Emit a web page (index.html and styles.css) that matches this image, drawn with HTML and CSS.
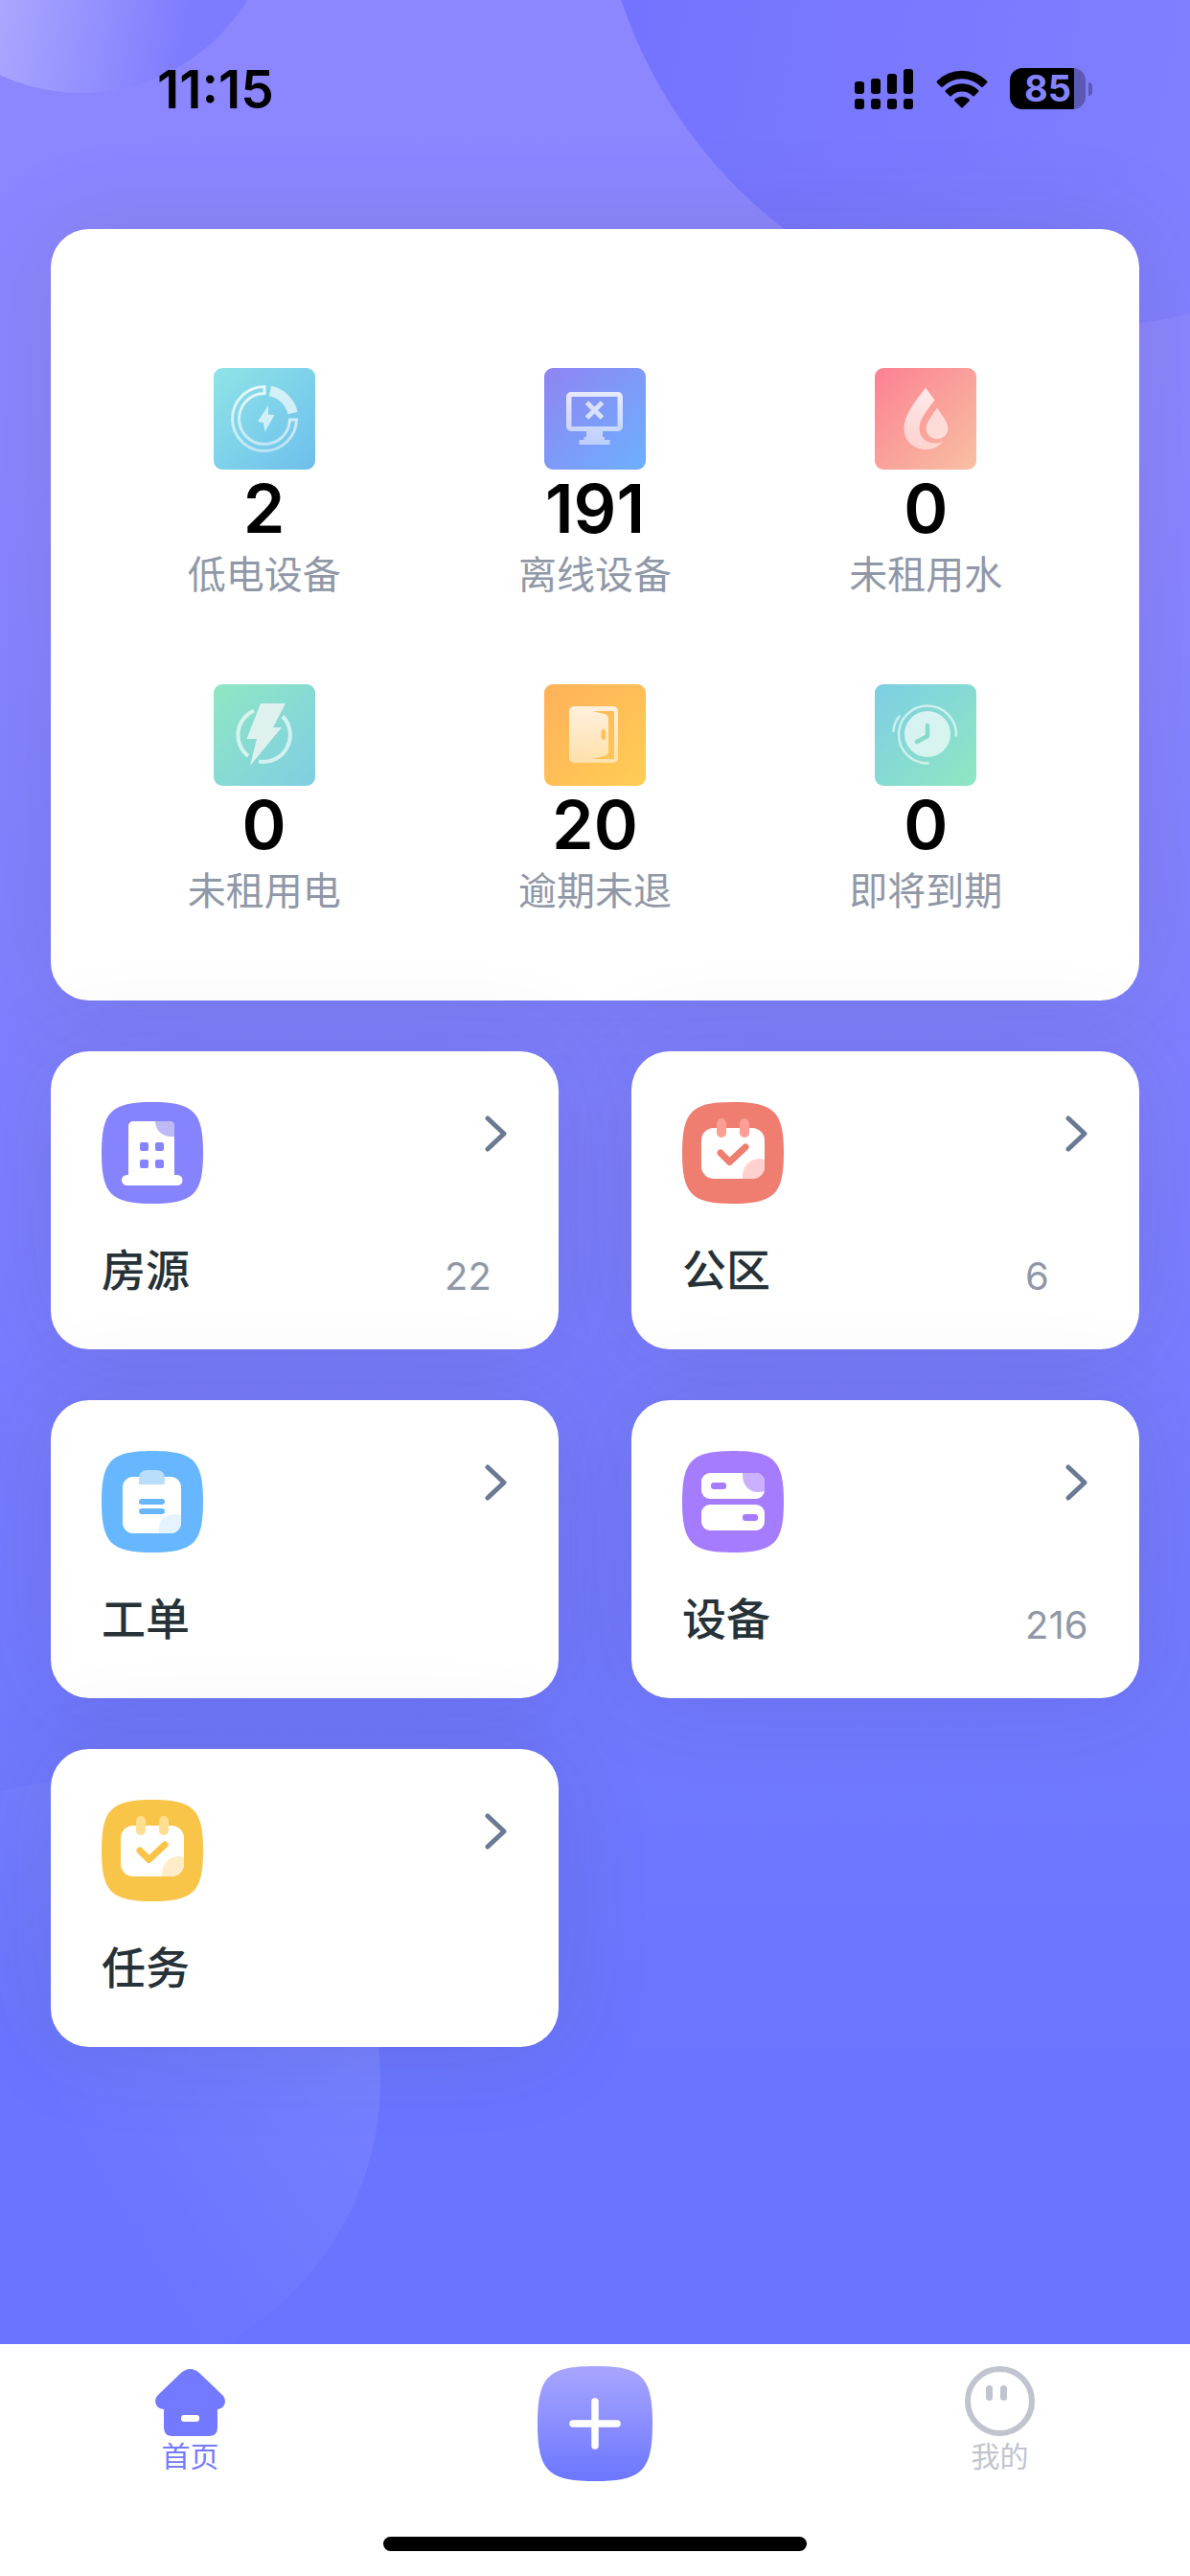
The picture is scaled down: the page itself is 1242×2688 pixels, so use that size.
FILE: index.html
```html
<!DOCTYPE html>
<html lang="zh-CN">
<head>
    <meta charset="UTF-8">
    <meta name="viewport" content="width=device-width, initial-scale=1.0">
    <title>首页</title>
    <link rel="stylesheet" href="styles.css">
</head>
<body>
<div class="page">
    <div class="decor">
        <span class="circle circle-left"></span>
        <span class="circle circle-right"></span>
        <span class="circle circle-bottom"></span>
    </div>

    <header class="status-bar">
        <span class="time">11:15</span>
        <div class="status-icons">
            <svg width="62" height="42" viewBox="0 0 62 42">
                <rect x="0" y="13" width="10" height="13" rx="3"/>
                <rect x="17" y="10" width="10" height="16" rx="3"/>
                <rect x="34" y="5" width="10" height="21" rx="3"/>
                <rect x="51" y="0" width="10" height="26" rx="3"/>
                <rect x="0" y="31" width="10" height="11" rx="3"/>
                <rect x="17" y="31" width="10" height="11" rx="3"/>
                <rect x="34" y="31" width="10" height="11" rx="3"/>
                <rect x="51" y="31" width="10" height="11" rx="3"/>
            </svg>
            <svg width="54" height="40" viewBox="0 0 54 40">
                <path d="M1 11.500A37 37 0 0 1 53 11.500Q54 12.500 53 13.500L49 17.500Q48 18.500 47 17.500A28.500 28.500 0 0 0 7 17.500Q6 18.500 5 17.500L1 13.500Q0 12.500 1 11.500Z"/>
                <path d="M10 21A24.500 24.500 0 0 1 44 21Q45 22 44 23L40 27Q39 28 38 27A16 16 0 0 0 16 27Q15 28 14 27L10 23Q9 22 10 21Z"/>
                <path d="M19.500 30.500A11.500 11.500 0 0 1 34.500 30.500Q35.500 31.500 34.500 32.500L28 39Q27 40 26 39L19.500 32.500Q18.500 31.500 19.500 30.500Z"/>
            </svg>
            <div class="battery"><span class="battery-level">85</span></div>
        </div>
    </header>

    <main class="content">
        <section class="stats">
            <a class="stat" href="#">
                <span class="stat-icon cyan">
                    <svg viewBox="0 0 106 106">
                        <defs>
                            <linearGradient id="fade" x1="0" y1="0" x2="0" y2="1">
                                <stop offset="0" stop-color="#fff" stop-opacity=".8"/>
                                <stop offset="1" stop-color="#fff" stop-opacity=".5"/>
                            </linearGradient>
                        </defs>
                        <path d="M53 19.500A33.500 33.500 0 1 0 86.500 54H79.500A26.500 26.500 0 1 1 53 26.500Z" fill="none" stroke="url(#fade)" stroke-width="3"/>
                        <path d="M59 24A30 30 0 0 1 82.500 47" fill="none" stroke="#fff" stroke-opacity=".66" stroke-width="10.500"/>
                        <path d="M57 39L46 56L52 57L53.500 66.500L63.500 49L57 48.500Z" fill="#fff" fill-opacity=".65"/>
                    </svg>
                </span>
                <strong>2</strong>
                <span class="stat-label">低电设备</span>
            </a>
            <a class="stat" href="#">
                <span class="stat-icon indigo">
                    <svg viewBox="0 0 106 106">
                        <path d="M28 25H77A5 5 0 0 1 82 30V61A5 5 0 0 1 77 66H61V72H63V75H68.500V80H36.500V75H41.500V72H44V66H28A5 5 0 0 1 23 61V30A5 5 0 0 1 28 25ZM28.500 30V61H76.500V30Z" fill="url(#fade)" fill-rule="evenodd"/>
                        <path d="M44.500 36L60.500 52M60.500 36L44.500 52" stroke="#fff" stroke-opacity=".7" stroke-width="5"/>
                    </svg>
                </span>
                <strong>191</strong>
                <span class="stat-label">离线设备</span>
            </a>
            <a class="stat" href="#">
                <span class="stat-icon pink">
                    <svg viewBox="0 0 106 106">
                        <path d="M53 20.500L62.500 33.500C54 45 46.500 54 46.500 63C46.500 74 57 82 71 77C66 82.500 60 85 53 85C40 85 30.500 75 30.500 63C30.500 49 43 34 53 20.500Z" fill="url(#fade)"/>
                        <path d="M65 41.500C70 49 76.500 57 76.500 63C76.500 69.500 71 74 65 74C59 74 53.500 69.500 53.500 63C53.500 57 60 49 65 41.500Z" fill="#fff" fill-opacity=".6"/>
                    </svg>
                </span>
                <strong>0</strong>
                <span class="stat-label">未租用水</span>
            </a>
            <a class="stat" href="#">
                <span class="stat-icon green">
                    <svg viewBox="0 0 106 106">
                        <path d="M42 27.500A28 28 0 0 0 36 75M72 33.500A28 28 0 0 1 47 80.500" fill="none" stroke="#fff" stroke-opacity=".65" stroke-width="4"/>
                        <path d="M49 20H75L62 45H71L38 85L45 57H34.500Z" fill="#eef4f3" fill-opacity=".85"/>
                    </svg>
                </span>
                <strong>0</strong>
                <span class="stat-label">未租用电</span>
            </a>
            <a class="stat" href="#">
                <span class="stat-icon orange">
                    <svg viewBox="0 0 106 106">
                        <path d="M31 23H72A5 5 0 0 1 77 28V77A5 5 0 0 1 72 82H31A5 5 0 0 1 26 77V28A5 5 0 0 1 31 23ZM50 28L63 31Q67 32 67 36V70Q67 74 63 75L50 78H73V28ZM62 47Q59.500 47 59.500 50V55Q59.500 58 62 58Q64 58 64 55V50Q64 47 62 47Z" fill="url(#fade)" fill-rule="evenodd"/>
                    </svg>
                </span>
                <strong>20</strong>
                <span class="stat-label">逾期未退</span>
            </a>
            <a class="stat" href="#">
                <span class="stat-icon teal">
                    <svg viewBox="0 0 106 106" fill="none" stroke-linecap="round" stroke-linejoin="round">
                        <circle cx="55" cy="52" r="24" fill="#fff" fill-opacity=".67"/>
                        <path d="M85 53.500A30 30 0 1 0 55.500 82.500M25.500 33.500Q20 40 19.500 49" stroke="#fff" stroke-opacity=".6" stroke-width="2.500"/>
                        <path d="M55 43V54L44 60" stroke="#86dbcb" stroke-width="4.500"/>
                    </svg>
                </span>
                <strong>0</strong>
                <span class="stat-label">即将到期</span>
            </a>
        </section>

        <nav class="menu">
            <a class="menu-card" href="#">
                <div class="menu-main">
                    <svg class="menu-icon" viewBox="0 0 106 106">
                        <path d="M53 0C96 0 106 10 106 53S96 106 53 106 0 96 0 53 10 0 53 0Z" fill="#8683ff"/>
                        <path d="M33 20H71A5 5 0 0 1 76 25V76H79A5.500 5.500 0 0 1 79 87H26.500A5.500 5.500 0 0 1 26.500 76H28V25A5 5 0 0 1 33 20Z" fill="#fff"/>
                        <path d="M56 20H71A5 5 0 0 1 76 25V36H72A16 16 0 0 1 56 20Z" fill="#bebaf5"/>
                        <g fill="#8683ff">
                            <rect x="40" y="42" width="9" height="9" rx="2"/>
                            <rect x="56" y="42" width="9" height="9" rx="2"/>
                            <rect x="40" y="60" width="9" height="9" rx="2"/>
                            <rect x="56" y="60" width="9" height="9" rx="2"/>
                        </g>
                    </svg>
                    <span class="menu-title">房源</span>
                </div>
                <div class="menu-side">
                    <svg class="arrow" viewBox="0 0 24 38"><path d="M3 3L20 19L3 35"/></svg>
                    <span class="count">22</span>
                </div>
            </a>
            <a class="menu-card" href="#">
                <div class="menu-main">
                    <svg class="menu-icon" viewBox="0 0 106 106">
                        <path d="M53 0C96 0 106 10 106 53S96 106 53 106 0 96 0 53 10 0 53 0Z" fill="#ef7d70"/>
                        <rect x="20" y="27" width="66" height="53" rx="13" fill="#fff"/>
                        <path d="M63 80C62 68 70 59 81 59L86 60V67A13 13 0 0 1 73 80Z" fill="#ffd1ce"/>
                        <rect x="36" y="17" width="10" height="20" rx="5" fill="#fb9f95"/>
                        <rect x="60" y="17" width="10" height="20" rx="5" fill="#fb9f95"/>
                        <path d="M40 53L49.500 62.500L66 47" fill="none" stroke="#ef7d70" stroke-width="7" stroke-linecap="round" stroke-linejoin="round"/>
                    </svg>
                    <span class="menu-title">公区</span>
                </div>
                <div class="menu-side">
                    <svg class="arrow" viewBox="0 0 24 38"><path d="M3 3L20 19L3 35"/></svg>
                    <span class="count">6</span>
                </div>
            </a>
            <a class="menu-card" href="#">
                <div class="menu-main">
                    <svg class="menu-icon" viewBox="0 0 106 106">
                        <path d="M53 0C96 0 106 10 106 53S96 106 53 106 0 96 0 53 10 0 53 0Z" fill="#66b7ff"/>
                        <rect x="22" y="27" width="61" height="59" rx="11" fill="#fff"/>
                        <path d="M60 86C58 75 65 66 76 66L83 67V75A11 11 0 0 1 72 86Z" fill="#e4f3fe"/>
                        <path d="M39 35V29Q39 20 48 20H57Q66 20 66 29V33Q66 35 64 35Z" fill="#b8defb"/>
                        <rect x="39" y="50" width="27" height="6" rx="3" fill="#66b7ff"/>
                        <rect x="39" y="60" width="27" height="6" rx="3" fill="#66b7ff"/>
                    </svg>
                    <span class="menu-title">工单</span>
                </div>
                <div class="menu-side">
                    <svg class="arrow" viewBox="0 0 24 38"><path d="M3 3L20 19L3 35"/></svg>
                </div>
            </a>
            <a class="menu-card" href="#">
                <div class="menu-main">
                    <svg class="menu-icon" viewBox="0 0 106 106">
                        <path d="M53 0C96 0 106 10 106 53S96 106 53 106 0 96 0 53 10 0 53 0Z" fill="#a67cff"/>
                        <rect x="20" y="23" width="66" height="27" rx="9" fill="#fff"/>
                        <rect x="20" y="56" width="66" height="27" rx="9" fill="#fff"/>
                        <path d="M63 23H77A9 9 0 0 1 86 32V42C73 46 62 38 63 23Z" fill="#cbb0ff"/>
                        <rect x="30" y="33" width="16" height="7" rx="3" fill="#a67cff"/>
                        <rect x="63" y="66" width="16" height="7" rx="3" fill="#a67cff"/>
                    </svg>
                    <span class="menu-title">设备</span>
                </div>
                <div class="menu-side">
                    <svg class="arrow" viewBox="0 0 24 38"><path d="M3 3L20 19L3 35"/></svg>
                    <span class="count">216</span>
                </div>
            </a>
            <a class="menu-card" href="#">
                <div class="menu-main">
                    <svg class="menu-icon" viewBox="0 0 106 106">
                        <path d="M53 0C96 0 106 10 106 53S96 106 53 106 0 96 0 53 10 0 53 0Z" fill="#f9c549"/>
                        <rect x="20" y="27" width="66" height="53" rx="13" fill="#fff"/>
                        <path d="M63 80C62 68 70 59 81 59L86 60V67A13 13 0 0 1 73 80Z" fill="#ffecc8"/>
                        <rect x="36" y="17" width="10" height="20" rx="5" fill="#ffdf91"/>
                        <rect x="60" y="17" width="10" height="20" rx="5" fill="#ffdf91"/>
                        <path d="M40 53L49.500 62.500L66 47" fill="none" stroke="#f9c549" stroke-width="7" stroke-linecap="round" stroke-linejoin="round"/>
                    </svg>
                    <span class="menu-title">任务</span>
                </div>
                <div class="menu-side">
                    <svg class="arrow" viewBox="0 0 24 38"><path d="M3 3L20 19L3 35"/></svg>
                </div>
            </a>
        </nav>
    </main>

    <footer class="tab-bar">
        <div class="tabs">
            <a class="tab active" href="#">
                <svg viewBox="0 0 73 73">
                    <path d="M27 7Q36.500 -1 46 7L70 30C76 36 72 45 65 45V64Q65 73 56 73H18Q9 73 9 64V45C1 45 -3 36 3 30Z" fill="#747aff"/>
                    <rect x="27" y="51" width="19" height="7" rx="3" fill="#fff"/>
                </svg>
                <span>首页</span>
            </a>
            <button class="add" type="button" aria-label="添加">
                <svg viewBox="0 0 120 120">
                    <defs>
                        <linearGradient id="addFill" x1="0" y1="0" x2="0" y2="1">
                            <stop offset="0" stop-color="#a9a6ff"/>
                            <stop offset="1" stop-color="#6b76ff"/>
                        </linearGradient>
                    </defs>
                    <path d="M60 0C109 0 120 11 120 60S109 120 60 120 0 109 0 60 11 0 60 0Z" fill="url(#addFill)"/>
                    <path d="M60 37V83M37 60H83" stroke="#fff" stroke-width="7.500" stroke-linecap="round"/>
                </svg>
            </button>
            <a class="tab" href="#">
                <svg viewBox="0 0 73 73">
                    <circle cx="36.500" cy="36.500" r="33.500" fill="none" stroke="#c0c4ce" stroke-width="6"/>
                    <rect x="22" y="20" width="7" height="16" rx="3.500" fill="#c0c4ce"/>
                    <rect x="37" y="20" width="7" height="16" rx="3.500" fill="#c0c4ce"/>
                </svg>
                <span>我的</span>
            </a>
        </div>
        <div class="home-indicator"></div>
    </footer>
</div>
</body>
</html>
```

FILE: styles.css
```css
* {
    box-sizing: border-box;
}
body {
    margin: 0;
    font-family: Inter, "Noto Sans CJK SC", sans-serif;
    color: #263238;
}
a {
    color: inherit;
    text-decoration: none;
}
svg {
    display: block;
}
.page {
    position: relative;
    z-index: 0;
    display: flex;
    flex-direction: column;
    min-height: 100vh;
    background: linear-gradient(#8c87ff 0%, #8b85ff 18%, #6975ff 80%, #6774ff 100%);
}

/* фоновые круги */
.decor {
    position: absolute;
    inset: 0;
    z-index: -1;
    overflow: hidden;
}
.circle {
    position: absolute;
    border-radius: 50%;
}
.circle-left {
    left: -118px;
    top: -309px;
    width: 406px;
    height: 406px;
    background: linear-gradient(100deg, #b0aeff 30%, #7f7bff 78%);
}
.circle-right {
    right: -379px;
    top: -656px;
    width: 998px;
    height: 998px;
    background: linear-gradient(100deg, #7070ff 0%, #8280ff 70%);
}
.circle-bottom {
    left: -229px;
    top: 1858px;
    width: 626px;
    height: 626px;
    background: linear-gradient(240deg, rgba(255, 255, 255, 0.12) 0%, rgba(255, 255, 255, 0) 55%);
}

.status-bar {
    display: flex;
    justify-content: space-between;
    align-items: center;
    height: 185px;
    padding: 0 102px 0 164px;
    color: #000;
}
.time {
    font-size: 55px;
    font-weight: 600;
}
.status-icons {
    display: flex;
    align-items: center;
    gap: 23px;
}
.battery {
    display: flex;
    align-items: center;
    gap: 3px;
}
.battery::after {
    content: "";
    width: 4px;
    height: 14px;
    border-radius: 0 4px 4px 0;
    background: #5a59b4;
}
.battery-level {
    width: 79px;
    height: 43px;
    border-radius: 13px;
    background: linear-gradient(90deg, #000 85%, #5a59b4 85%);
    color: #8584ff;
    font-size: 38px;
    font-weight: 700;
    line-height: 43px;
    text-align: center;
}

.content {
    flex: 1;
    display: flex;
    flex-direction: column;
    gap: 53px;
    padding: 54px 53px;
}
.stats,
.menu-card {
    border-radius: 40px;
    background: #fff;
    box-shadow: 0 0 100px rgba(60, 60, 60, 0.13);
}
.stats {
    display: grid;
    grid-template-columns: repeat(3, 1fr);
    row-gap: 87px;
    padding: 145px 50px 87px;
}
.stat {
    display: flex;
    flex-direction: column;
    align-items: center;
}
.stat strong {
    color: #000;
    font-size: 70px;
    font-weight: 600;
    line-height: 82px;
}
.stat-label {
    color: #9098a8;
    font-size: 40px;
    line-height: 55px;
}
.stat-icon {
    width: 106px;
    height: 106px;
    border-radius: 9px;
}
.cyan { background: linear-gradient(135deg, #8fe4e7, #6dbfec); }
.indigo { background: linear-gradient(135deg, #8f84f1, #6db0ff); }
.pink { background: linear-gradient(135deg, #fc8193, #f8c0a2); }
.green { background: linear-gradient(135deg, #8fe7c3, #7fcee3); }
.orange { background: linear-gradient(135deg, #ffb15a, #ffcd54); }
.teal { background: linear-gradient(135deg, #7dcee4, #8fe7c1); }

.menu {
    display: grid;
    grid-template-columns: 1fr 1fr;
    gap: 53px 76px;
}
.menu-card {
    display: flex;
    justify-content: space-between;
    padding: 53px;
}
.menu-main {
    display: flex;
    flex-direction: column;
    gap: 39px;
}
.menu-icon {
    width: 106px;
    height: 106px;
}
.menu-title {
    font-size: 46px;
    font-weight: 500;
    line-height: 60px;
}
.menu-side {
    display: flex;
    flex-direction: column;
    justify-content: space-between;
    min-width: 66px;
    padding-top: 14px;
}
.arrow {
    align-self: flex-end;
    width: 24px;
    height: 38px;
    fill: none;
    stroke: #6b7a94;
    stroke-width: 5;
    stroke-linecap: round;
    stroke-linejoin: round;
}
.count {
    color: #9098a8;
    font-size: 40px;
    line-height: 46px;
}

.tab-bar {
    padding: 23px 0 26px;
    background: #fff;
}
.tabs {
    display: flex;
    justify-content: space-between;
    padding: 0 162px;
}
.tab {
    display: flex;
    flex-direction: column;
    align-items: center;
    color: #c0c4ce;
    font-size: 30px;
    line-height: 42px;
}
.tab svg {
    width: 73px;
    height: 73px;
}
.tab.active {
    color: #747aff;
}
.add {
    width: 120px;
    height: 120px;
    padding: 0;
    border: none;
    background: none;
    cursor: pointer;
}
.home-indicator {
    width: 442px;
    height: 15px;
    margin: 58px auto 0;
    border-radius: 8px;
    background: #000;
}
```
